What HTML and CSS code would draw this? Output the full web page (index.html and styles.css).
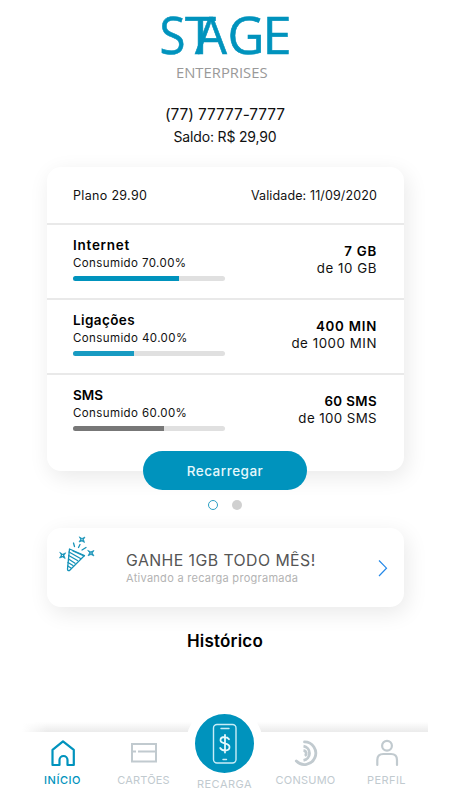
FILE: index.html
```html
<!DOCTYPE html>
<html lang="pt-BR">
<head>
<meta charset="utf-8">
<title>Stage Enterprises</title>
<link rel="stylesheet" href="styles.css">
</head>
<body>
<div class="app">
  <header class="head">
    <svg class="logo" width="140" height="86" viewBox="155 0 140 86">
      <g class="logo-name">
        <text x="159.500" y="54" textLength="26" lengthAdjust="spacingAndGlyphs">S</text>
        <text x="185" y="54" textLength="31" lengthAdjust="spacingAndGlyphs">T</text>
        <text x="195" y="54" textLength="32" lengthAdjust="spacingAndGlyphs">A</text>
        <text x="227.500" y="54" textLength="37" lengthAdjust="spacingAndGlyphs">G</text>
        <text x="262.500" y="54" textLength="29" lengthAdjust="spacingAndGlyphs">E</text>
      </g>
      <text class="logo-sub" x="176" y="77.700" textLength="91.500" lengthAdjust="spacingAndGlyphs">ENTERPRISES</text>
    </svg>
    <div class="phone">(77) 77777-7777</div>
    <div class="saldo">Saldo: R$ 29,90</div>
  </header>

  <section class="card plan">
    <div class="plan-head"><span class="plano">Plano 29.90</span><span class="validade">Validade: 11/09/2020</span></div>
    <div class="row">
      <div class="use"><b class="w-net">Internet</b><span>Consumido 70.00%</span><div class="bar"><i style="width:70%"></i></div></div>
      <div class="amount"><b>7 GB</b><span>de 10 GB</span></div>
    </div>
    <div class="row">
      <div class="use"><b class="w-lig">Ligações</b><span>Consumido 40.00%</span><div class="bar light"><i style="width:40%"></i></div></div>
      <div class="amount"><b>400 MIN</b><span>de 1000 MIN</span></div>
    </div>
    <div class="row sms">
      <div class="use"><b>SMS</b><span>Consumido 60.00%</span><div class="bar gray"><i style="width:60%"></i></div></div>
      <div class="amount"><b>60 SMS</b><span>de 100 SMS</span></div>
    </div>
  </section>
  <button class="recharge">Recarregar</button>
  <div class="dots"><i class="dot on"></i><i class="dot"></i></div>

  <section class="card promo">
    <svg class="party" width="38" height="38" viewBox="58 535 38 38" fill="none" stroke="#1592b8" stroke-width="1.300" stroke-linecap="round" stroke-linejoin="round">
      <path d="M69.500 549L84.500 555.500L69.500 570.500Q67.500 571 67.500 569Z"/>
      <path d="M69 552L80.500 558.500M68.700 555.500L77.500 560.500M68.500 559L75 563.300M68 562.500L73 565.500M67.800 566L71 568M73 551L84 556"/>
      <path d="M74.500 546.500L73.500 543M78.500 547.500L80 544.500M82 550L86 547.500"/>
      <g fill="#1592b8" stroke-width=".7">
        <path d="M79.500 537L82 538.500L85 537L83.500 539.500L84.500 542.500L82 541L79 542L80.500 539.500Z"/>
        <path d="M60 552.500L62.700 554.200L65.700 552.800L64 555.500L65.200 558.500L62.500 557L59.500 558L61.200 555.200Z"/>
        <path d="M88 550.500L90.800 551.800L94 550.500L92.300 553L94 556L91 554.500L88 555.800L89.500 553Z"/>
      </g>
      <g fill="#fff" stroke="none"><circle cx="82" cy="539.700" r=".6"/><circle cx="62.500" cy="555.500" r=".6"/><circle cx="91" cy="553" r=".6"/></g>
    </svg>
    <div class="promo-text"><div class="promo-title">GANHE 1GB TODO MÊS!</div><div class="promo-sub">Ativando a recarga programada</div></div>
    <svg class="chev" width="10" height="18" viewBox="0 0 10 18" fill="none" stroke="#2488e8" stroke-width="1.200"><path d="M1 1.500L8.500 9.200L1 17"/></svg>
  </section>

  <h2>Histórico</h2>

  <nav>
    <a class="tab active">
      <svg width="28" height="28" viewBox="0 0 28 28" fill="none" stroke="#0093bd" stroke-width="2.200" stroke-linejoin="round"><path d="M3.500 10.800L14 2.300L24.800 10.800V26H18.500V21A4 4 0 0 0 10.500 21V26H3.500Z"/></svg>
      <span class="l-inicio">INÍCIO</span>
    </a>
    <a class="tab">
      <svg width="28" height="28" viewBox="0 0 28 28" fill="none" stroke="#c1cacf" stroke-width="2"><path d="M2 5H26V22.500H2ZM2 12.500H6M8 12.500H26"/></svg>
      <span class="l-cartoes">CARTÕES</span>
    </a>
    <a class="tab center">
      <div class="bubble">
        <svg width="26" height="42" viewBox="0 0 26 42" fill="none" stroke="#c9edf7" stroke-width="1.400" stroke-linecap="round"><rect x="1.500" y="1.500" width="22.500" height="38.500" rx="3.500"/><path d="M9 5.500H17M11 36.500H14.500"/><path stroke="#e5f8fc" stroke-width="1.800" d="M17 16.200C16 14.500 14.500 14 12.700 14C10 14 8.500 15.300 8.500 17.200C8.500 21.500 17.500 19 17.500 24C17.500 26.300 15.600 27.500 13 27.500C10.800 27.500 9.200 26.700 8.200 25M13 12V29.500"/></svg>
      </div>
      <span class="l-recarga">RECARGA</span>
    </a>
    <a class="tab">
      <svg width="28" height="28" viewBox="0 0 28 28" fill="none" stroke="#c1cacf" stroke-width="2.800"><path stroke-linecap="round" d="M12.500 2.900A11.300 11.300 0 1 1 4.300 22"/><path d="M11.500 7.200A7.200 7.200 0 0 1 11.500 21.400"/><path d="M11.500 11.300A3.200 3.200 0 0 1 13 17"/></svg>
      <span class="l-consumo">CONSUMO</span>
    </a>
    <a class="tab">
      <svg width="28" height="28" viewBox="0 0 28 28" fill="none" stroke="#c1cacf" stroke-width="2.200" stroke-linecap="round"><circle cx="14" cy="6.800" r="4.900"/><path d="M4.300 26V21Q4.300 15 10.300 15H18Q24 15 24 21V26"/></svg>
      <span class="l-perfil">PERFIL</span>
    </a>
  </nav>
</div>
</body>
</html>
```

FILE: styles.css
```css
* { box-sizing: border-box; }
body { margin: 0; background: #fff; color: #111; font-family: Inter, "Liberation Sans", sans-serif; }
.app { width: 450px; height: 800px; overflow: hidden; display: flex; flex-direction: column; }
.head { display: flex; flex-direction: column; align-items: center; height: 167px; flex: none; }
.logo { display: block; flex: none; }
.logo-name { font: 51.500px "Open Sans", sans-serif; fill: #0093bd; stroke: #0093bd; stroke-width: .6px; }
.logo-sub { font: 13.700px "Open Sans", sans-serif; fill: #999; }
.phone { margin-top: 17px; font-size: 15.500px; line-height: 23px; letter-spacing: -.1px; }
.saldo { font-size: 14px; line-height: 22px; letter-spacing: -.17px; }
.card { width: 357px; margin-left: 47px; flex: none; background: #fff; border-radius: 14px; box-shadow: 3px 6px 22px rgba(0,0,0,.09); }
.plan { height: 304px; }
.plan-head { height: 56px; padding: 0 27px 0 26px; display: flex; align-items: center; justify-content: space-between; font-size: 12.500px; }
.plano { letter-spacing: .33px; }
.validade { letter-spacing: .12px; }
.row { height: 75px; border-top: 2px solid #e9e9e9; padding: 10px 27px 0 26px; display: flex; justify-content: space-between; }
.use { width: 152px; }
.use b, .use span { display: block; }
b { font-weight: 600; color: #000; }
.use b { font-size: 13.500px; line-height: 20px; }
.use .w-net { letter-spacing: .75px; }
.use .w-lig { letter-spacing: .4px; }
.use span { font-size: 11.500px; line-height: 16px; letter-spacing: .4px; }
.bar { margin-top: 5px; height: 5px; border-radius: 3px; background: #e0e0e0; overflow: hidden; }
.bar i { display: block; height: 5px; background: #0093bd; }
.bar.light i { background: #189bc2; }
.bar.gray i { background: #777; }
.amount { display: flex; flex-direction: column; text-align: right; padding-top: 8px; font-size: 13.300px; line-height: 17px; letter-spacing: .55px; }
.amount b { letter-spacing: .75px; }
.sms .amount, .sms .amount b { letter-spacing: .4px; }
.recharge { flex: none; position: relative; margin: -20px 0 0 143px; width: 164px; height: 39px; border: 0; border-radius: 20px; background: #0093bd; color: #e5f8fc; font: 500 13.500px Inter, sans-serif; letter-spacing: .5px; }
.dots { flex: none; height: 38px; padding: 10px 0 0 208px; display: flex; gap: 14px; }
.dot { width: 10px; height: 10px; border-radius: 50%; background: #d0d0d0; }
.dot.on { background: #fff; border: 1.500px solid #2a9fc4; }
.promo { height: 79px; display: flex; }
.party { margin: 7px 0 0 11px; flex: none; }
.promo-text { margin: 23px 0 0 30px; width: 220px; white-space: nowrap; }
.promo-title { font-size: 15.800px; line-height: 20px; color: #555; letter-spacing: .45px; }
.promo-sub { font-size: 11px; line-height: 14px; color: #b3b3b3; letter-spacing: .28px; }
.chev { margin: 31px 0 0 32px; }
h2 { margin: 23px 0 0; text-align: center; font-size: 17px; line-height: 22px; font-weight: 600; color: #000; letter-spacing: .2px; }
nav { margin: 80px 0 0 22px; width: 406px; height: 68px; flex: none; display: grid; grid-template-columns: repeat(5, 81px); position: relative; }
nav::before { content: ""; position: absolute; left: 0; right: 0; top: -10px; height: 10px; background: linear-gradient(transparent, #ebebeb); -webkit-mask-image: linear-gradient(90deg, transparent, #000 25px); mask-image: linear-gradient(90deg, transparent, #000 25px); }
.tab { display: flex; flex-direction: column; align-items: center; padding-top: 7px; color: #c1cacf; font-size: 11px; line-height: 16px; }
.tab span { margin-top: 5px; }
.tab.active { color: #0093bd; }
.l-inicio { letter-spacing: .5px; font-weight: 500; }
.l-cartoes { letter-spacing: .15px; }
.l-recarga { letter-spacing: .5px; }
.l-consumo { letter-spacing: .25px; }
.l-perfil { letter-spacing: .4px; }
.center { padding-top: 0; position: relative; }
.bubble { flex: none; margin-top: -27px; width: 77px; height: 77px; border: 9px solid #fff; border-radius: 50%; background: #0093bd; display: flex; align-items: center; justify-content: center; }
.tab.center span { margin-top: -6px; position: relative; }
```
